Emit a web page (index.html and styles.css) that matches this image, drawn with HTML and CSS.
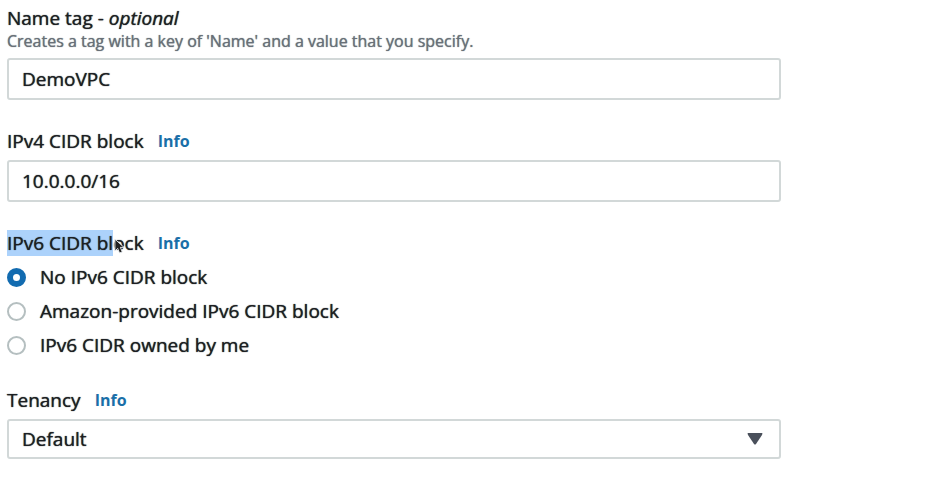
FILE: index.html
```html
<!DOCTYPE html>
<html lang="en">
<head>
<meta charset="utf-8">
<title>Create VPC</title>
<link rel="stylesheet" href="styles.css">
</head>
<body>
<form class="form">
  <div class="field">
    <label class="label" for="name">Name tag - <em>optional</em></label>
    <p class="hint">Creates a tag with a key of 'Name' and a value that you specify.</p>
    <input class="control" id="name" type="text" value="DemoVPC">
  </div>
  <div class="field">
    <div class="heading"><label class="label" for="ipv4">IPv4 CIDR block</label><a class="info" href="#">Info</a></div>
    <input class="control" id="ipv4" type="text" value="10.0.0.0/16">
  </div>
  <fieldset class="field choices">
    <legend class="heading"><span class="label"><mark class="selected">IPv6 CIDR bl</mark>ock<svg class="pointer" viewBox="0 0 12 18" aria-hidden="true"><path d="M1 1v13l3-3 2 5 3-1-2-5h4z"/></svg></span><a class="info" href="#">Info</a></legend>
    <label class="choice"><input type="radio" name="ipv6" checked>No IPv6 CIDR block</label>
    <label class="choice"><input type="radio" name="ipv6">Amazon-provided IPv6 CIDR block</label>
    <label class="choice"><input type="radio" name="ipv6">IPv6 CIDR owned by me</label>
  </fieldset>
  <div class="field">
    <div class="heading"><label class="label" for="tenancy">Tenancy</label><a class="info" href="#">Info</a></div>
    <div class="select">
      <select class="control" id="tenancy"><option>Default</option></select>
      <svg class="arrow" viewBox="0 0 16 12" aria-hidden="true"><path d="M1 0h14q1 0 0 2L9 11q-1 1-2 0L1 2q-1-2 0-2z"/></svg>
    </div>
  </div>
</form>
</body>
</html>
```
FILE: styles.css
```css
* { box-sizing: border-box; }
body {
  margin: 0;
  background: #fff;
  color: #1c1f23;
  font: 500 19px/24px "Open Sans", "Noto Sans", sans-serif;
  text-shadow: 0 0 1px currentColor;
}
.form {
  width: 84%;
  padding: 6px 5px 0 7px;
}
.field { margin: 0 0 29px; }
.field:last-child { margin: 0; }
.hint {
  margin: 0 0 6px;
  color: #687078;
  font-size: 16px;
  line-height: 22px;
}
.heading {
  display: flex;
  gap: 14px;
  margin-bottom: 7px;
  padding: 0;
}
.info {
  color: #1a6fa8;
  font-size: 16px;
  font-weight: 700;
  text-decoration: none;
  text-shadow: none;
}
.control {
  display: block;
  width: 100%;
  height: 42px;
  padding: 0 13px;
  border: 2px solid #d2d8d8;
  border-radius: 3px;
  background: #fff;
  color: inherit;
  font: inherit;
  text-shadow: inherit;
  appearance: none;
}
.choices {
  margin-bottom: 31px;
  padding: 0;
  border: 0;
}
.choices .heading { margin-bottom: 10px; }
.label { position: relative; }
.selected { background: #acd2fb; color: inherit; }
.pointer {
  position: absolute;
  top: 7px;
  right: 19px;
  width: 11px;
  height: 17px;
  fill: #222;
  stroke: #e8edf2;
}
.choice {
  display: flex;
  align-items: center;
  gap: 14px;
  margin-bottom: 10px;
}
.choice:last-child { margin-bottom: 0; }
.choice input {
  width: 19px;
  height: 19px;
  margin: 0;
  border: 2px solid #b5bfc0;
  border-radius: 50%;
  appearance: none;
}
.choice input:checked { border: 6px solid #126bb0; }
.select { position: relative; }
.select .control { height: 40px; }
.arrow {
  position: absolute;
  top: 14px;
  right: 18px;
  width: 16px;
  height: 12px;
  fill: #4a505b;
  pointer-events: none;
}
```
